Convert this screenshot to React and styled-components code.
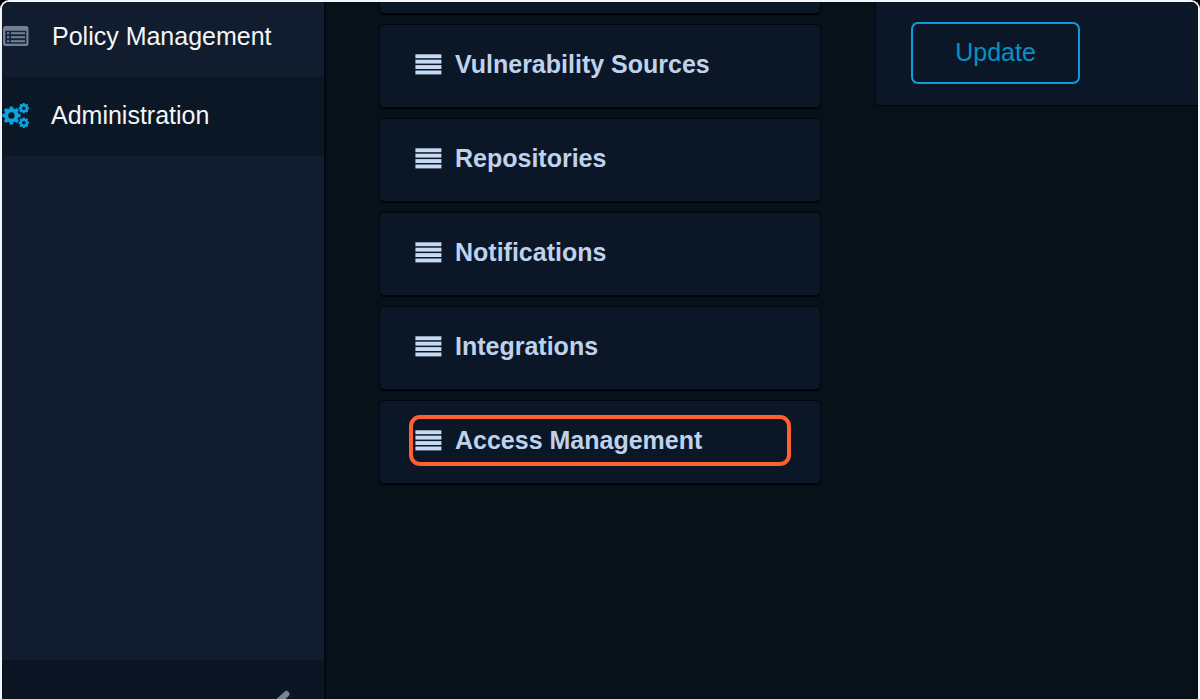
import React from "react";
import styled, { createGlobalStyle } from "styled-components";

const GlobalStyle = createGlobalStyle`
  *, *::before, *::after { box-sizing: border-box; }
  body {
    margin: 0;
    background: #000;
    font-family: "Liberation Sans", Arial, sans-serif;
    font-size: 25px;
    line-height: 30px;
    overflow: hidden;
  }
  ul { list-style: none; margin: 0; padding: 0; }
`;

const Frame = styled.div`
  display: flex;
  height: 100vh;
  overflow: hidden;
  border: 2px solid #f4f5fa;
  border-bottom: 0;
  border-radius: 9px 9px 0 0;
  background: #07111a;
`;

const Sidebar = styled.nav`
  display: flex;
  flex-direction: column;
  flex: 0 0 324px;
  background: #111d2e;
  border-right: 2px solid #020810;
`;

const NavList = styled.ul`
  flex: 1;
`;

const NavLink = styled.a`
  display: flex;
  align-items: center;
  gap: 22px;
  height: ${(p) => (p.$active ? 79 : 75)}px;
  padding-bottom: ${(p) => (p.$active ? 4 : 8)}px;
  color: #f3f5f7;
  text-decoration: none;
  background: ${(p) => (p.$active ? "#0b1724" : "transparent")};

  svg {
    flex: none;
    color: ${(p) => (p.$active ? "#0ba3e0" : "#718096")};
  }
`;

const SidebarFooter = styled.div`
  display: flex;
  justify-content: flex-end;
  height: 39px;
  padding: 30px 33px 0 0;
  overflow: hidden;
  background: #0b1523;
`;

const CollapseButton = styled.button`
  display: block;
  height: 26px;
  padding: 0;
  border: 0;
  background: none;
  color: #75859a;
`;

const Main = styled.main`
  display: flex;
  align-items: flex-start;
  flex: 1;
  gap: 56px;
  min-width: 0;
  padding-left: 54px;
`;

const Menu = styled.ul`
  display: flex;
  flex-direction: column;
  flex: 0 0 440px;
  gap: 12px;
`;

const Card = styled.li`
  position: relative;
  height: ${(p) => (p.$cut ? 11 : 82)}px;
  border-radius: ${(p) => (p.$cut ? "0 0 4px 4px" : "4px")};
  background: #0b1726;
  box-shadow: 0 0 1px 1px #020710, 0 2px 1px #01030a;
`;

const CardLink = styled.a`
  display: flex;
  align-items: center;
  gap: 13px;
  height: 100%;
  padding: 0 35px 4px;
  color: #bfd2ec;
  font-weight: bold;
  text-decoration: none;
`;

const Highlight = styled.span`
  position: absolute;
  inset: 14px 29px 17px;
  border: 4px solid #ff5f31;
  border-radius: 11px;
  pointer-events: none;
`;

const Panel = styled.section`
  flex: 1;
  min-width: 0;
  padding: 20px 35px 21px;
  border-radius: 0 0 0 4px;
  background: #0b1726;
  box-shadow: 0 0 1px 1px #020710, 0 1px 1px #01030a;
`;

const UpdateButton = styled.button`
  display: block;
  width: 169px;
  height: 62px;
  padding: 0 0 2px;
  border: 2px solid #0a9fda;
  border-radius: 7px;
  background: transparent;
  color: #0891c9;
  font: inherit;
`;

const ListIcon = () => (
  <svg width="28" height="22" viewBox="0 0 28 22" aria-hidden="true">
    <rect x="1" y="1" width="25.5" height="20" rx="2.5" fill="currentColor" />
    <rect x="3.3" y="5.7" width="21" height="13" fill="#172438" />
    {[7.2, 11.2, 15.2].map((y) => (
      <g key={y} fill="currentColor">
        <rect x="5" y={y} width="2.4" height="2" />
        <rect x="9" y={y} width="14" height="2" />
      </g>
    ))}
  </svg>
);

const Gear = ({ x, y, r, ring, tooth, height }) => (
  <g transform={`translate(${x} ${y})`}>
    <circle r={r - ring / 2} fill="none" stroke="currentColor" strokeWidth={ring} />
    {[0, 45, 90, 135, 180, 225, 270, 315].map((angle) => (
      <path
        key={angle}
        d={`M${-tooth} ${-r + 0.8} L${-tooth * 0.75} ${-r - height} H${tooth * 0.75} L${tooth} ${-r + 0.8}Z`}
        fill="currentColor"
        transform={`rotate(${angle})`}
      />
    ))}
  </g>
);

const CogsIcon = () => (
  <svg width="27" height="28" viewBox="0 0 27 28" aria-hidden="true">
    <Gear x={9.4} y={14.5} r={7.2} ring={4} tooth={2.1} height={1.9} />
    <Gear x={21.8} y={7.2} r={4.1} ring={2.3} tooth={1.3} height={1.2} />
    <Gear x={21.8} y={21.7} r={4.1} ring={2.3} tooth={1.3} height={1.2} />
  </svg>
);

const BarsIcon = () => (
  <svg width="27" height="21" viewBox="0 0 27 21" fill="#c6daf3" aria-hidden="true">
    {[0, 5.4, 10.8, 16.2].map((y) => (
      <rect key={y} x="0.4" y={y + 0.3} width="26" height="3.9" />
    ))}
  </svg>
);

const ChevronIcon = () => (
  <svg width="18" height="26" viewBox="0 0 18 26" aria-hidden="true">
    <path
      d="M13.5 4 L3 13.5 L13.5 23"
      fill="none"
      stroke="currentColor"
      strokeWidth="6"
      strokeLinecap="round"
    />
  </svg>
);

const items = [
  { label: "Vulnerability Sources" },
  { label: "Repositories" },
  { label: "Notifications" },
  { label: "Integrations" },
  { label: "Access Management", highlighted: true },
];

export default function App() {
  return (
    <>
      <GlobalStyle />
      <Frame>
        <Sidebar>
          <NavList>
            <li>
              <NavLink href="#policy">
                <ListIcon />
                Policy Management
              </NavLink>
            </li>
            <li>
              <NavLink href="#administration" $active>
                <CogsIcon />
                Administration
              </NavLink>
            </li>
          </NavList>
          <SidebarFooter>
            <CollapseButton type="button" aria-label="Collapse sidebar">
              <ChevronIcon />
            </CollapseButton>
          </SidebarFooter>
        </Sidebar>
        <Main>
          <Menu>
            <Card $cut />
            {items.map(({ label, highlighted }) => (
              <Card key={label}>
                <CardLink href="#settings">
                  <BarsIcon />
                  {label}
                </CardLink>
                {highlighted && <Highlight />}
              </Card>
            ))}
          </Menu>
          <Panel>
            <UpdateButton type="button">Update</UpdateButton>
          </Panel>
        </Main>
      </Frame>
    </>
  );
}
